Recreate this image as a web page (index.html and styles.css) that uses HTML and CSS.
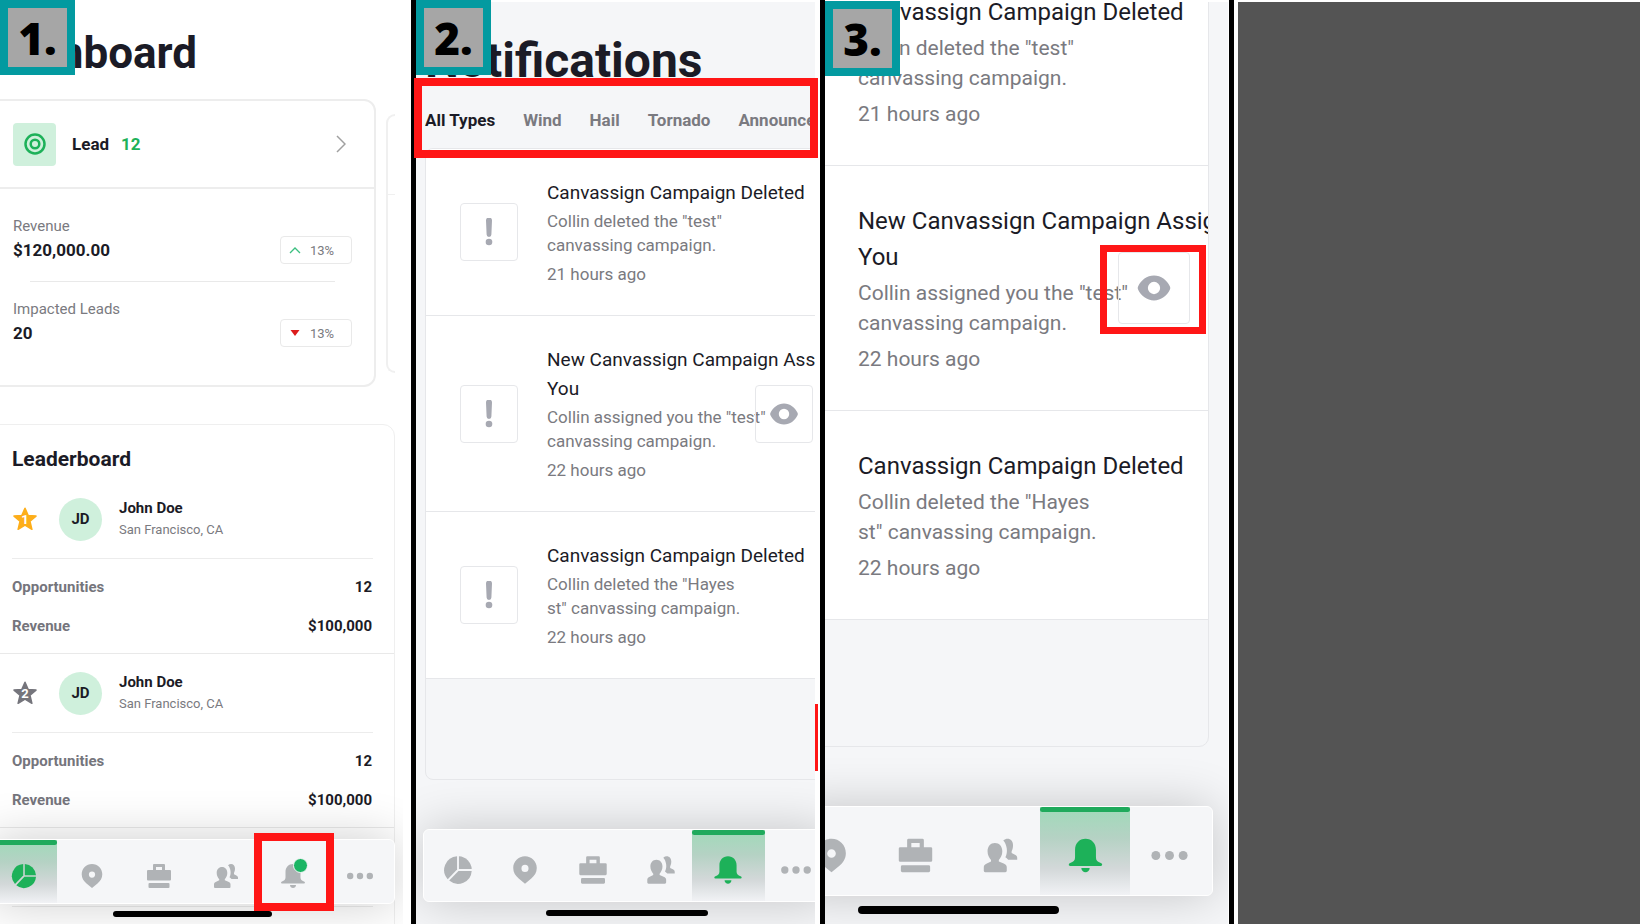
FILE: index.html
```
<!DOCTYPE html>
<html lang="en">
<head>
<meta charset="UTF-8">
<meta name="viewport" content="width=device-width, initial-scale=1.0">
<title>Notifications Guide</title>
<link rel="stylesheet" href="styles.css">
</head>
<body>

<!-- shared icons -->
<svg class="sprite" aria-hidden="true">
  <symbol id="icon-pie" viewBox="-2 -2 28 28">
    <path d="M12.8 0A12 12 0 0 1 24 11.2H12.8z"/>
    <path d="M24 12.8A12 12 0 0 1 4.3 21.2L12.4 12.8z"/>
    <path d="M11.2 0A12 12 0 0 0 3 20L11.2 11.6z"/>
  </symbol>
  <symbol id="icon-pin" viewBox="-2 -2 28 28">
    <path fill-rule="evenodd" d="M12 0C6.2 0 1.7 4.5 1.7 10.3c0 4 2 6.8 4.8 9.2L12 24l5.5-4.500c2.800-2.400 4.800-5.200 4.800-9.200C22.300 4.500 17.800 0 12 0zm0 7.500a3.100 3.100 0 1 1 0 6.200a3.100 3.100 0 0 1 0-6.200z"/>
  </symbol>
  <symbol id="icon-case" viewBox="-2 -2 28 28">
    <path fill-rule="evenodd" d="M7 0h10a1 1 0 0 1 1 1v5h5a1 1 0 0 1 1 1v8.500a1 1 0 0 1-1 1H1a1 1 0 0 1-1-1V7a1 1 0 0 1 1-1h5V1a1 1 0 0 1 1-1zm2 3v3h6V3z"/>
    <rect x="1.500" y="19" width="21" height="5" rx="1"/>
  </symbol>
  <symbol id="icon-people" viewBox="-2 -2 28 28">
    <path d="M8 3c3.200 0 5.300 2.400 5.300 6 0 2.700-1.200 4.700-2.500 6.200v1.100l3.500 1.500c1.400.6 2.200 1.400 2.200 2.700V23a1 1 0 0 1-1 1H1a1 1 0 0 1-1-1v-2.500c0-1.300.8-2.100 2.200-2.700l3-1.500v-1.100C3.900 13.700 2.700 11.700 2.700 9c0-3.600 2.100-6 5.300-6z"/>
    <path d="M14 1.200C15 .4 16 0 17 0c2.400 0 4 1.900 4 4.600 0 2.200-.6 3.400-1 4.400v1.200l2.400 1.200c1 .5 1.600 1.200 1.600 2.200V15h-6.500c-.7-.7-1.300-1.200-2-1.700 1-2 1.300-4 1-6.300-.3-2.400-1.200-4.500-2.500-5.800z"/>
  </symbol>
  <symbol id="icon-bell" viewBox="-2 -2 28 28">
    <path d="M12 0C7.500 0 4.500 3.400 4.500 7.800v5.700c0 2-1.200 3.200-3.500 3.900-1.300.4-1.300 2.100 0 2.100h22c1.300 0 1.300-1.700 0-2.100-2.300-.7-3.500-1.900-3.500-3.900V7.800C19.500 3.400 16.500 0 12 0z"/>
    <path d="M9 21h6c0 1.800-1.500 3-3 3s-3-1.200-3-3z"/>
  </symbol>
  <symbol id="icon-dots" viewBox="-2 -2 28 28">
    <circle cx="2.200" cy="12" r="3.200"/><circle cx="12" cy="12" r="3.200"/><circle cx="21.800" cy="12" r="3.200"/>
  </symbol>
  <symbol id="icon-star" viewBox="0 0 24 24">
    <path stroke="currentColor" stroke-width="1.500" stroke-linejoin="round" d="M12 1.200l3.100 7.200 7.900.7-6 5.200 1.900 8-6.900-4.100-6.900 4.100 1.900-8-6-5.200 7.900-.7z"/>
  </symbol>
  <symbol id="icon-alert" viewBox="0 0 8 28">
    <path d="M1 2.500a3 3 0 0 1 6 0l-.6 14a2.400 2.400 0 0 1-4.800 0z"/><circle cx="4" cy="24" r="3.300"/>
  </symbol>
  <symbol id="icon-eye" viewBox="0 0 28 22">
    <path fill-rule="evenodd" d="M14 .5C8 .5 3 4.500.600 9.500a3 3 0 0 0 0 3C3 17.500 8 21.500 14 21.500s11-4 13.400-9a3 3 0 0 0 0-3C25 4.500 20 .5 14 .5zm0 5.300a5.200 5.200 0 1 1 0 10.400a5.200 5.200 0 0 1 0-10.400z"/>
  </symbol>
</svg>

<main class="guide">

  <section class="step step-dashboard">
    <div class="phone">
      <h1>Dashboard</h1>

      <div class="cards">
        <article class="card">
          <header class="card-header">
            <span class="card-icon">
              <svg viewBox="0 0 22 22" fill="none" stroke="currentColor" stroke-width="2.500"><circle cx="11" cy="11" r="9.500"/><circle cx="11" cy="11" r="4.300"/></svg>
            </span>
            <h2>Lead</h2>
            <span class="count">12</span>
            <svg class="chevron" viewBox="0 0 10 18" fill="none" stroke="currentColor" stroke-width="1.500"><path d="M1 1l8 8-8 8"/></svg>
          </header>
          <div class="card-body">
            <div class="metric">
              <div>
                <p class="metric-label">Revenue</p>
                <p class="metric-value">$120,000.00</p>
              </div>
              <span class="trend up">
                <svg viewBox="0 0 12 8" fill="none" stroke="currentColor" stroke-width="1.300"><path d="M1 7l5-5 5 5"/></svg>13%
              </span>
            </div>
            <hr>
            <div class="metric">
              <div>
                <p class="metric-label">Impacted Leads</p>
                <p class="metric-value">20</p>
              </div>
              <span class="trend down">
                <svg viewBox="0 0 12 8" fill="currentColor"><path d="M1.500 1h9L6 7z"/></svg>13%
              </span>
            </div>
          </div>
        </article>
        <article class="card-next"></article>
      </div>

      <section class="leaderboard">
        <h2>Leaderboard</h2>
        <article class="leader">
          <header>
            <span class="rank gold"><svg><use href="#icon-star"/></svg><b>1</b></span>
            <span class="avatar">JD</span>
            <div>
              <h3>John Doe</h3>
              <p>San Francisco, CA</p>
            </div>
          </header>
          <dl>
            <div><dt>Opportunities</dt><dd>12</dd></div>
            <div><dt>Revenue</dt><dd>$100,000</dd></div>
          </dl>
        </article>
        <article class="leader">
          <header>
            <span class="rank"><svg><use href="#icon-star"/></svg><b>2</b></span>
            <span class="avatar">JD</span>
            <div>
              <h3>John Doe</h3>
              <p>San Francisco, CA</p>
            </div>
          </header>
          <dl>
            <div><dt>Opportunities</dt><dd>12</dd></div>
            <div><dt>Revenue</dt><dd>$100,000</dd></div>
          </dl>
        </article>
        <article class="leader">
          <header></header>
        </article>
      </section>

      <nav class="tabbar">
        <a href="#" class="active" aria-label="Dashboard"><svg><use href="#icon-pie"/></svg></a>
        <a href="#" aria-label="Map"><svg><use href="#icon-pin"/></svg></a>
        <a href="#" aria-label="Jobs"><svg><use href="#icon-case"/></svg></a>
        <a href="#" aria-label="Contacts"><svg><use href="#icon-people"/></svg></a>
        <a href="#" class="unread" aria-label="Notifications"><svg><use href="#icon-bell"/></svg></a>
        <a href="#" aria-label="More"><svg><use href="#icon-dots"/></svg></a>
      </nav>
      <span class="home-bar"></span>
    </div>
    <span class="step-number">1.</span>
    <span class="highlight"></span>
  </section>

  <section class="step step-types">
    <div class="phone">
      <h1>Notifications</h1>

      <div class="types">
        <button type="button" class="selected">All Types</button>
        <button type="button">Wind</button>
        <button type="button">Hail</button>
        <button type="button">Tornado</button>
        <button type="button">Announcements</button>
      </div>

      <div class="notifications">
        <article class="notification">
          <span class="box"><svg class="alert"><use href="#icon-alert"/></svg></span>
          <div class="text">
            <h3>Canvassign Campaign Deleted</h3>
            <p>Collin deleted the "test"<br>canvassing campaign.</p>
            <time>21 hours ago</time>
          </div>
        </article>
        <article class="notification">
          <span class="box"><svg class="alert"><use href="#icon-alert"/></svg></span>
          <div class="text">
            <h3>New Canvassign Campaign Assigned to<br>You</h3>
            <p>Collin assigned you the "test"<br>canvassing campaign.</p>
            <time>22 hours ago</time>
          </div>
          <button type="button" class="box view" aria-label="View"><svg class="eye"><use href="#icon-eye"/></svg></button>
        </article>
        <article class="notification">
          <span class="box"><svg class="alert"><use href="#icon-alert"/></svg></span>
          <div class="text">
            <h3>Canvassign Campaign Deleted</h3>
            <p>Collin deleted the "Hayes<br>st" canvassing campaign.</p>
            <time>22 hours ago</time>
          </div>
        </article>
      </div>

      <nav class="tabbar">
        <a href="#" aria-label="Dashboard"><svg><use href="#icon-pie"/></svg></a>
        <a href="#" aria-label="Map"><svg><use href="#icon-pin"/></svg></a>
        <a href="#" aria-label="Jobs"><svg><use href="#icon-case"/></svg></a>
        <a href="#" aria-label="Contacts"><svg><use href="#icon-people"/></svg></a>
        <a href="#" class="active" aria-label="Notifications"><svg><use href="#icon-bell"/></svg></a>
        <a href="#" aria-label="More"><svg><use href="#icon-dots"/></svg></a>
      </nav>
      <span class="home-bar"></span>
    </div>
    <span class="step-number">2.</span>
    <span class="highlight"></span>
    <span class="mark"></span>
  </section>

  <section class="step step-view">
    <div class="phone">
      <div class="notifications">
        <article class="notification">
          <div class="text">
            <h3>Canvassign Campaign Deleted</h3>
            <p>Collin deleted the "test"<br>canvassing campaign.</p>
            <time>21 hours ago</time>
          </div>
        </article>
        <article class="notification">
          <div class="text">
            <h3>New Canvassign Campaign Assigned to<br>You</h3>
            <p>Collin assigned you the "test"<br>canvassing campaign.</p>
            <time>22 hours ago</time>
          </div>
          <button type="button" class="box view" aria-label="View"><svg class="eye"><use href="#icon-eye"/></svg></button>
        </article>
        <article class="notification">
          <div class="text">
            <h3>Canvassign Campaign Deleted</h3>
            <p>Collin deleted the "Hayes<br>st" canvassing campaign.</p>
            <time>22 hours ago</time>
          </div>
        </article>
      </div>

      <nav class="tabbar">
        <a href="#" aria-label="Map"><svg><use href="#icon-pin"/></svg></a>
        <a href="#" aria-label="Jobs"><svg><use href="#icon-case"/></svg></a>
        <a href="#" aria-label="Contacts"><svg><use href="#icon-people"/></svg></a>
        <a href="#" class="active" aria-label="Notifications"><svg><use href="#icon-bell"/></svg></a>
        <a href="#" aria-label="More"><svg><use href="#icon-dots"/></svg></a>
      </nav>
      <span class="home-bar"></span>
    </div>
    <span class="step-number">3.</span>
    <span class="highlight"></span>
  </section>

  <div class="blank"></div>

</main>

</body>
</html>
```
FILE: styles.css
```
* {
  box-sizing: border-box;
}

body {
  font-family: Roboto, Arial, sans-serif;
  background-color: #fff;
  color: #1b1b26;
  margin: 0;
}

h1, h2, h3, p, dl, dd {
  margin: 0;
}

button {
  font-family: inherit;
  background: none;
  border: none;
  padding: 0;
  cursor: pointer;
}

svg {
  display: block;
  fill: currentColor;
}

svg[fill="none"] {
  fill: none;
}

.sprite {
  position: absolute;
  width: 0;
  height: 0;
}

.guide {
  display: grid;
  grid-template-columns: 416fr 409fr 413fr 402fr;
  height: 100vh;
}

.blank {
  background-color: #545454;
  margin-top: 2px;
}

/* steps */

.step {
  position: relative;
  min-width: 0;
  height: 100vh;
  border-right: 5px solid #000;
}

.phone {
  position: relative;
  height: 100%;
  overflow: hidden;
}

.step-number {
  position: absolute;
  top: 0;
  left: 0;
  width: 75px;
  height: 75px;
  border: 8px solid #039aa0;
  background-color: #a6a6a6;
  color: #000;
  font-family: "Open Sans", sans-serif;
  font-size: 44px;
  font-weight: 800;
  line-height: 60px;
  text-align: center;
}

.highlight {
  position: absolute;
  border: 8px solid #ff1616;
  pointer-events: none;
  z-index: 2;
}

h1 {
  font-weight: 700;
  line-height: 56px;
}

/* bottom bar */

.tabbar {
  position: absolute;
  display: grid;
  grid-auto-flow: column;
  grid-auto-columns: 1fr;
  background-color: #f5f6f8;
  border: 1px solid #fff;
  border-radius: 6px;
  box-shadow: 0 0 50px rgba(0, 0, 0, 0.2);
}

.tabbar a {
  position: relative;
  display: flex;
  align-items: center;
  justify-content: center;
  padding-top: 8px;
  color: #b0b3b6;
}

.tabbar svg {
  width: 28px;
  height: 28px;
}

.tabbar .active {
  color: #1db159;
  background: linear-gradient(#9fdab9, #b5d2c4 35%, #d3d8d9 70%, #f1f2f5);
}

.tabbar .active::before {
  content: "";
  position: absolute;
  top: 0;
  left: 0;
  right: 0;
  height: 5px;
  border-radius: 3px;
  background-color: #1faa5c;
}

.tabbar .unread::after {
  content: "";
  position: absolute;
  top: 18px;
  left: 50%;
  width: 13px;
  height: 13px;
  border: 1px solid #f5f6f8;
  border-radius: 50%;
  background-color: #1bb564;
}

.home-bar {
  position: absolute;
  height: 6px;
  border-radius: 4px;
  background-color: #000;
}

/* dashboard */

.step-dashboard .phone {
  margin-right: 8px;
  padding: 25px 8px 0 0;
}

.step-dashboard h1 {
  font-size: 44px;
  margin: 0 0 18px -16px;
}

.cards {
  display: flex;
  gap: 10px;
  margin-left: -20px;
}

.card {
  flex: 1;
  border: 2px solid #ededed;
  border-radius: 12px;
}

.card-next {
  width: 9px;
  margin: 15px 0 14px;
  border: 2px solid #f0f0f0;
  border-right: none;
  border-radius: 12px 0 0 12px;
}

.card-next::before {
  content: "";
  display: block;
  height: 78px;
  border-bottom: 1px solid #f0f0f0;
}

.card-header {
  display: flex;
  align-items: center;
  height: 88px;
  padding: 0 28px 0 31px;
  border-bottom: 2px solid #ededed;
}

.card-icon {
  display: flex;
  align-items: center;
  justify-content: center;
  width: 43px;
  height: 43px;
  margin-right: 16px;
  border-radius: 4px;
  background-color: #cff0dc;
  color: #1db159;
}

.card-icon svg {
  width: 22px;
  height: 22px;
}

.card-header h2 {
  font-size: 17px;
}

.count {
  margin-left: 12px;
  color: #1db159;
  font-size: 17px;
  font-weight: 700;
}

.chevron {
  width: 10px;
  height: 18px;
  margin-left: auto;
  color: #a0a0a0;
}

.card-body {
  padding: 27px 22px 38px 31px;
}

.card-body hr {
  height: 1px;
  margin: 17px;
  border: none;
  background-color: #e9e9e9;
}

.metric {
  display: flex;
  align-items: flex-end;
  justify-content: space-between;
}

.metric-label {
  color: #7a7a80;
  font-size: 15px;
  line-height: 20px;
}

.metric-value {
  font-size: 17px;
  font-weight: 700;
  line-height: 28px;
}

.trend {
  display: flex;
  align-items: center;
  gap: 9px;
  width: 72px;
  height: 28px;
  padding-left: 8px;
  border: 1px solid #e9e9e9;
  border-radius: 4px;
  color: #7a7a80;
  font-size: 13px;
}

.trend svg {
  width: 12px;
  height: 8px;
}

.up svg {
  color: #3cbf80;
}

.down svg {
  color: #dc1c1c;
}

.leaderboard {
  margin: 37px 0 0 -20px;
  border: 1px solid #efefef;
  border-radius: 12px;
  padding-top: 22px;
}

.leaderboard h2 {
  font-size: 21px;
  line-height: 24px;
  padding-left: 31px;
  margin-bottom: 9px;
}

.leader {
  height: 174px;
  padding: 0 21px 0 31px;
  border-bottom: 1px solid #e9e9e9;
}

.leader header {
  display: flex;
  align-items: center;
  height: 79px;
  border-bottom: 1px solid #ececec;
}

.rank {
  position: relative;
  width: 26px;
  height: 24px;
  color: #75757c;
}

.rank svg {
  width: 26px;
  height: 24px;
}

.rank b {
  position: absolute;
  inset: 0;
  color: #fff;
  font-size: 13px;
  line-height: 26px;
  text-align: center;
}

.gold {
  color: #fdae1a;
}

.avatar {
  width: 43px;
  height: 43px;
  margin: 0 17px 0 21px;
  border-radius: 50%;
  background-color: #cff0dc;
  font-size: 15px;
  font-weight: 700;
  line-height: 43px;
  text-align: center;
}

.leader h3 {
  font-size: 15px;
  line-height: 22px;
}

.leader p {
  color: #7a7a80;
  font-size: 13px;
  line-height: 22px;
}

.leader dl {
  padding: 9px 1px 0 0;
}

.leader dl div {
  display: flex;
  justify-content: space-between;
  font-size: 15px;
  font-weight: 700;
  line-height: 39px;
}

.leader dt {
  color: #75757c;
}

.step-dashboard .tabbar {
  left: -10px;
  right: 8px;
  bottom: 20px;
  height: 65px;
}

.step-dashboard .active {
  margin-right: 1px;
}

.step-dashboard .home-bar {
  left: 28%;
  width: 159px;
  bottom: 7px;
}

.step-dashboard .highlight {
  right: 77px;
  bottom: 13px;
  width: 80px;
  height: 78px;
}

/* notification types */

.step-types .phone {
  height: calc(100% - 2px);
  margin: 2px 5px 0 0;
  padding: 31px 0 0 9px;
  background-color: #f5f6f8;
}

.step-types h1 {
  font-size: 48px;
}

.types {
  display: flex;
  gap: 28px;
  margin: 19px 0 16px;
  overflow: hidden;
}

.types button {
  flex: none;
  color: #7a7a80;
  font-size: 17px;
  font-weight: 700;
  line-height: 24px;
}

.types .selected {
  color: #1b1b26;
}

.notifications {
  border: 1px solid #e6e7ea;
  border-radius: 8px;
  overflow: hidden;
}

.step-types .notifications {
  margin-right: -14px;
  padding-bottom: 100px;
}

.notification {
  position: relative;
  display: flex;
  align-items: center;
  gap: 29px;
  padding: 29px 0 29px 34px;
  border-bottom: 1px solid #e6e7ea;
  background-color: #fff;
  overflow: hidden;
}

.text {
  white-space: nowrap;
  color: #7a7a80;
  font-size: 17px;
  line-height: 24px;
}

.text h3 {
  margin-bottom: 2px;
  color: #1b1b26;
  font-size: 19px;
  font-weight: 400;
  line-height: 29px;
}

.text time {
  display: block;
  margin-top: 5px;
}

.box {
  display: flex;
  flex: none;
  align-items: center;
  justify-content: center;
  width: 58px;
  height: 58px;
  border: 1px solid #e6e7ea;
  border-radius: 4px;
  color: #a7a9b2;
}

.alert {
  width: 8px;
  height: 28px;
}

.eye {
  width: 28px;
  height: 22px;
}

.view {
  position: absolute;
  top: 50%;
  right: 15px;
  transform: translateY(-50%);
}

.step-types .tabbar {
  left: 7px;
  right: -16px;
  bottom: 22px;
  height: 73px;
}

.step-types .tabbar svg {
  width: 32px;
  height: 32px;
}

.step-types .active {
  margin: 0 -3px;
}

.step-types .home-bar {
  left: 130px;
  right: 107px;
  bottom: 8px;
}

.step-types .highlight {
  top: 78px;
  left: -2px;
  right: 2px;
  height: 80px;
}

.mark {
  position: absolute;
  top: 704px;
  right: 2px;
  width: 3px;
  height: 67px;
  background-color: #ff1616;
}

/* notification view */

.step-view {
  border-right: none;
}

.step-view::after {
  content: "";
  position: absolute;
  top: 0;
  right: 4px;
  width: 5px;
  height: 100%;
  background-color: #000;
}

.step-view .phone {
  height: calc(100% - 2px);
  margin: 2px 10px 0 0;
  background-color: #f5f6f8;
}

.step-view .step-number {
  top: 1px;
}

.step-view .notifications {
  margin: -46px 19px 0 -12px;
  padding-bottom: 126px;
  border-radius: 10px;
}

.step-view .notification {
  padding: 37px 0 36px 44px;
}

.step-view .text {
  font-size: 21px;
  line-height: 30px;
}

.step-view .text h3 {
  margin-bottom: 3px;
  font-size: 24px;
  line-height: 36px;
}

.step-view time {
  margin-top: 6px;
}

.step-view .box {
  width: 72px;
  height: 72px;
  right: 18px;
}

.step-view .eye {
  width: 34px;
  height: 26px;
}

.step-view .tabbar {
  left: -37px;
  right: 15px;
  bottom: 28px;
  height: 90px;
}

.step-view .tabbar svg {
  width: 39px;
  height: 39px;
}

.step-view .tabbar .active {
  margin: 0 -3px;
}

.step-view .home-bar {
  left: 33px;
  right: 169px;
  bottom: 10px;
  height: 8px;
}

.step-view .highlight {
  top: 245px;
  right: 32px;
  width: 106px;
  height: 89px;
  border-width: 7px;
}
```
